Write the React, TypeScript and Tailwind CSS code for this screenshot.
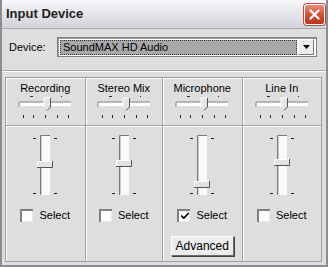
import { Check } from "lucide-react";

const channels = [
  { name: "Recording", width: "w-[80px]", thumb: 28, hx: 26, checked: false, advanced: false },
  { name: "Stereo Mix", width: "w-[78px]", thumb: 27, hx: 26, checked: false, advanced: false },
  { name: "Microphone", width: "w-[80px]", thumb: 48, hx: 26, checked: true, advanced: true },
  { name: "Line In", width: "w-[79px]", thumb: 26, hx: 26, checked: false, advanced: false },
];

function HSlider({ x }: { x: number }) {
  return (
    <svg width="54" height="24" viewBox="0 0 54 24">
      <rect x="12" y="1" width="3" height="1" fill="#333" />
      <rect x="43" y="1" width="1" height="1" fill="#333" />
      <rect x="1" y="7" width="52" height="5" fill="#fff" />
      <path d="M1 12V7h52" fill="none" stroke="#808080" />
      <path d="M1.5 11.5h51" stroke="#e0e0e0" />
      <path d={`M${x} 3h6v9l-3 3l-3-3z`} fill="#e4e4e4" />
      <path d={`M${x} 12V3h6`} fill="none" stroke="#fff" />
      <path d={`M${x + 6.5} 3v9l-3.5 3.5`} fill="none" stroke="#555" />
      {[5, 15, 27, 39, 50].map((t) => (
        <rect key={t} x={t} y="20" width="1" height="3" fill="#222" />
      ))}
    </svg>
  );
}

function VSlider({ y }: { y: number }) {
  return (
    <svg width="30" height="64" viewBox="0 0 30 64">
      <rect x="3" y="5" width="3" height="1" fill="#222" />
      <rect x="24" y="5" width="3" height="1" fill="#222" />
      <rect x="3" y="60" width="3" height="1" fill="#222" />
      <rect x="24" y="60" width="3" height="1" fill="#222" />
      <rect x="10" y="2" width="10" height="60" fill="#fafafa" />
      <path d="M10.5 62V2.5H20" fill="none" stroke="#7a7a7a" />
      <path d="M11.5 61V3.5" stroke="#c8c8c8" />
      <rect x="7" y={y} width="16" height="7" fill="#e2e2e2" />
      <path d={`M7.5 ${y + 7}V${y + 0.5}H23`} fill="none" stroke="#fff" />
      <path d={`M7 ${y + 6.5}H22.5V${y}`} fill="none" stroke="#555" />
    </svg>
  );
}

function CheckBox({ checked }: { checked: boolean }) {
  return (
    <span className="w-[13px] h-[13px] bg-white border-t-2 border-l-2 border-[#808080] shadow-[inset_-1px_-1px_0_#e8e8e8] flex items-center justify-center">
      {checked && <Check className="w-[10px] h-[10px] text-black" strokeWidth={4} />}
    </span>
  );
}

export default function App() {
  return (
    <div className="w-[328px] h-[267px] bg-[#dedede] border-x-2 border-b-2 border-[#8c8c94] flex flex-col font-['Liberation_Sans',Arial,sans-serif] text-black overflow-hidden">
      <div className="h-[29px] shrink-0 flex items-center justify-between pl-[4px] pr-[1px] bg-gradient-to-b from-[#f8f8fa] via-[#e4e4ea] to-[#d2d2da] border-b border-[#a8a8b0]">
        <span className="text-[13px] font-bold text-[#222]">Input Device</span>
        <div className="w-[21px] h-[21px] rounded-[3px] border border-white bg-gradient-to-b from-[#e88a78] via-[#d4533c] to-[#b8341e] flex items-center justify-center shadow-[0_0_0_1px_#b05040]">
          <svg width="11" height="11" viewBox="0 0 11 11">
            <path d="M1.5 1.5l8 8M9.5 1.5l-8 8" stroke="#fff" strokeWidth="2.2" strokeLinecap="round" />
          </svg>
        </div>
      </div>

      <div className="mt-[8px] h-[20px] shrink-0 flex items-center">
        <span className="ml-[7px] w-[48px] text-[11px]">Device:</span>
        <div className="w-[260px] h-[20px] border border-[#7f7f7f] shadow-[inset_1px_1px_0_#9a9a9a] bg-white flex items-center p-[2px] gap-[1px]">
          <div className="flex-1 h-[15px] bg-[#a8a8aa] border border-dotted border-[#333] flex items-center pl-[2px] text-[11px]">
            SoundMAX HD Audio
          </div>
          <div className="w-[16px] h-[16px] bg-[#ececec] border border-t-white border-l-white border-b-[#7a7a7a] border-r-[#7a7a7a] flex items-center justify-center">
            <svg width="7" height="4" viewBox="0 0 7 4">
              <path d="M0 0h7L3.5 4z" fill="#000" />
            </svg>
          </div>
        </div>
      </div>

      <div className="mt-[13px] h-[2px] shrink-0 border-t border-[#a4a4a4] border-b border-b-white" />

      <div className="mt-[5px] ml-[3px] w-[317px] h-[185px] shrink-0 flex border border-[#9c9c9c] shadow-[inset_1px_1px_0_#fff]">
        {channels.map((c, i) => (
          <div
            key={c.name}
            className={`${c.width} flex flex-col ${i < channels.length - 1 ? "border-r border-[#a2a2a2] shadow-[1px_0_0_#fff]" : ""}`}
          >
            <div className="h-[48px] shrink-0 flex flex-col items-center pt-[4px] border-b border-[#a2a2a2] shadow-[0_1px_0_#fff]">
              <span className="h-[13px] leading-[13px] text-[11px]">{c.name}</span>
              <HSlider x={c.hx} />
            </div>
            <div className="flex-1 flex flex-col items-center pt-[7px]">
              <VSlider y={c.thumb} />
              <div className="mt-[10px] flex items-center gap-[6px] text-[11px]">
                <CheckBox checked={c.checked} />
                <span>Select</span>
              </div>
              {c.advanced && (
                <button className="mt-[12px] w-[63px] h-[20px] bg-[#ececec] border border-t-white border-l-white border-b-[#6a6a6a] border-r-[#6a6a6a] shadow-[1px_1px_0_#404040] text-[12px]">
                  Advanced
                </button>
              )}
            </div>
          </div>
        ))}
      </div>
    </div>
  );
}
